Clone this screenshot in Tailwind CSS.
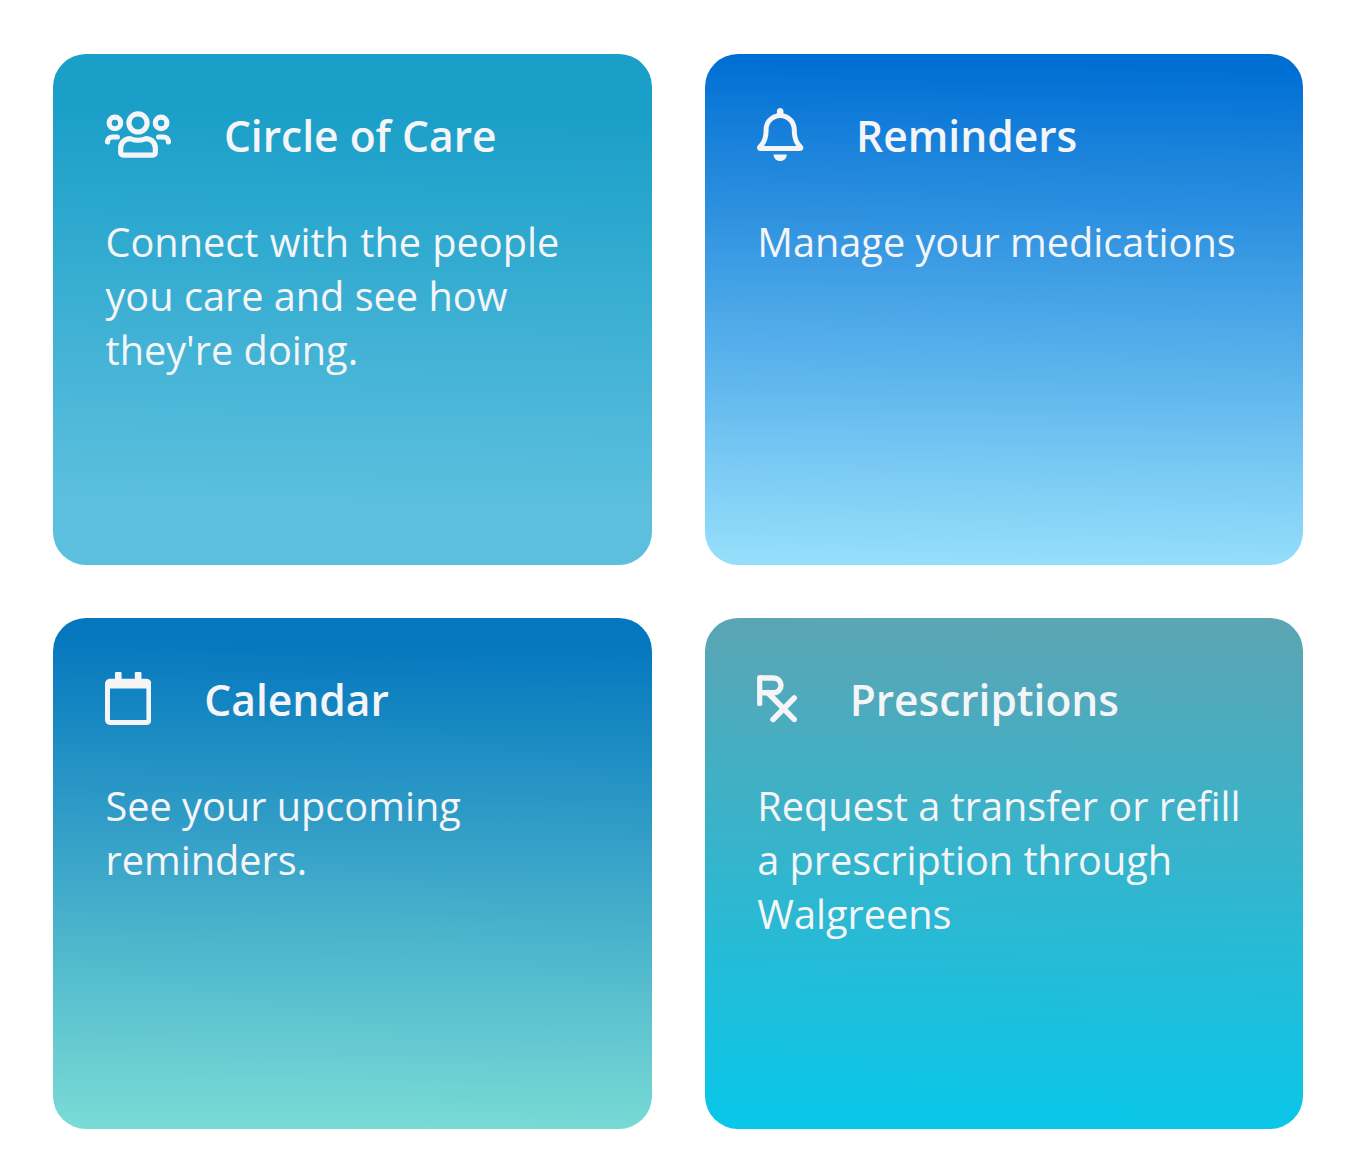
<!DOCTYPE html>
<html lang="en">
<head>
<meta charset="utf-8">
<title>Dashboard</title>
<script src="https://cdn.jsdelivr.net/npm/@tailwindcss/browser@4"></script>
</head>
<body class="bg-white">
<main class="grid h-[1166px] w-[1356px] grid-cols-2 grid-rows-[511px_511px] gap-[53px] px-[52.75px] pt-[54px] font-['Open_Sans',sans-serif] text-[#f5f5f7]">
  <section class="rounded-[33px] bg-[linear-gradient(181deg,#1a9fc8_12%,#5cbfde_87%)] px-[52.75px] pt-[51px]">
    <header class="-ml-[0.6px] flex h-[59px] items-center gap-[53px]">
      <svg class="h-[53px] w-[66px] shrink-0" viewBox="0 0 640 512" fill="none" stroke="currentColor" stroke-width="50" stroke-linecap="round">
        <circle cx="320" cy="144" r="88"/><circle cx="96" cy="144" r="56"/><circle cx="544" cy="144" r="56"/>
        <path d="M152 387c0-50 40-91 90-91 24 8 44 16 78 16s54-8 78-16c50 0 90 41 90 91v45c0 13-11 24-24 24H176c-13 0-24-11-24-24z"/>
        <path d="M24 328c0-26 22-48 48-48h48M616 328c0-26-22-48-48-48h-48"/>
      </svg>
      <h2 class="pt-[3px] text-[42.55px] font-semibold leading-[58px]">Circle of Care</h2>
    </header>
    <p class="mt-[52px] whitespace-nowrap text-[39.68px] leading-[53.9px]"><span class="[word-spacing:1px]">Connect with the people</span><br>you care and see how<br>they're doing.</p>
  </section>
  <section class="rounded-[33px] bg-[linear-gradient(181deg,#006fd4_3%,#96dffb_99%)] px-[52.75px] pt-[51px]">
    <header class="flex h-[59px] items-center gap-[52.4px]">
      <svg class="h-[53px] w-[46.4px] shrink-0" viewBox="0 0 448 512" fill="currentColor">
        <path d="M439.39 362.29c-19.32-20.76-55.47-51.99-55.47-154.29 0-77.7-54.48-139.9-127.94-155.16V32c0-17.67-14.32-32-31.98-32s-31.98 14.33-31.98 32v20.84C118.56 68.1 64.08 130.3 64.08 208c0 102.3-36.15 133.53-55.47 154.29-6 6.45-8.66 14.16-8.61 21.71.11 16.4 12.98 32 32.1 32h383.8c19.12 0 32-15.6 32.1-32 .05-7.55-2.61-15.27-8.61-21.71zM67.53 368c21.22-27.97 44.42-74.33 44.53-159.42 0-.2-.06-.38-.06-.58 0-61.86 50.14-112 112-112s112 50.14 112 112c0 .2-.06.38-.06.58.11 85.1 23.31 131.46 44.53 159.42H67.53zM224 512c35.32 0 63.97-28.65 63.97-64H160.03c0 35.35 28.65 64 63.97 64z"/>
      </svg>
      <h2 class="pt-[3px] text-[42.55px] font-semibold leading-[58px]">Reminders</h2>
    </header>
    <p class="mt-[52px] whitespace-nowrap text-[39.68px] leading-[53.9px]">Manage your medications</p>
  </section>
  <section class="rounded-[33px] bg-[linear-gradient(181deg,#0477be_5%,#79dbd5_99%)] px-[52.75px] pt-[51px]">
    <header class="-ml-[0.6px] flex h-[59px] items-center gap-[53px]">
      <svg class="h-[53px] w-[46.4px] shrink-0" viewBox="0 0 448 512" fill="currentColor">
        <path d="M400 64h-48V12c0-6.600-5.400-12-12-12h-40c-6.600 0-12 5.400-12 12v52H160V12c0-6.600-5.400-12-12-12h-40c-6.600 0-12 5.400-12 12v52H48C21.500 64 0 85.500 0 112v352c0 26.500 21.500 48 48 48h352c26.500 0 48-21.500 48-48V112c0-26.500-21.500-48-48-48zm-6 400H54c-3.300 0-6-2.700-6-6V160h352v298c0 3.300-2.700 6-6 6z"/>
      </svg>
      <h2 class="pt-[3px] text-[42.55px] font-semibold leading-[58px]">Calendar</h2>
    </header>
    <p class="mt-[52px] whitespace-nowrap text-[39.68px] leading-[53.9px]">See your upcoming<br>reminders.</p>
  </section>
  <section class="rounded-[33px] bg-[linear-gradient(181deg,#5ba5b4_2%,#0ac6e8_98%)] px-[52.75px] pt-[51px]">
    <header class="flex h-[59px] items-center gap-[52.4px]">
      <svg class="h-[53px] w-[40px] shrink-0" viewBox="0 0 384 512" fill="none" stroke="currentColor" stroke-width="52">
        <path d="M0 48a16 16 0 0 1 16-16H50V312a16 16 0 0 1-16 16H16a16 16 0 0 1-16-16z" fill="currentColor" stroke="none"/>
        <path d="M24 58H160a71 71 0 0 1 0 142H24"/>
        <path d="M104 200L358 458M154 458L358 252" stroke-linecap="round" stroke-width="54"/>
      </svg>
      <h2 class="pt-[3px] text-[42.45px] font-semibold leading-[58px]">Prescriptions</h2>
    </header>
    <p class="mt-[52px] whitespace-nowrap text-[39.68px] leading-[53.9px]">Request a transfer or refill<br>a prescription through<br>Walgreens</p>
  </section>
</main>
</body>
</html>
